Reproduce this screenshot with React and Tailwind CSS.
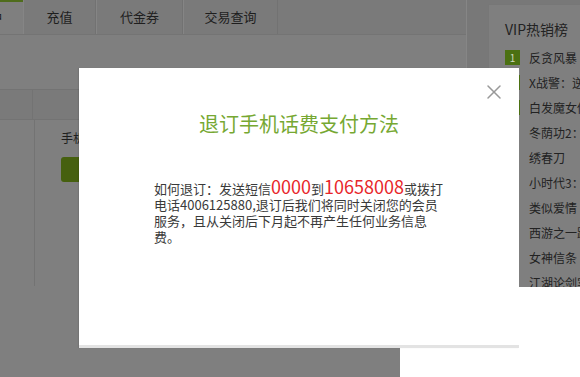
import { X } from 'lucide-react';

const tabs = [
  { label: '充值', width: 'w-[73px]' },
  { label: '代金券', width: 'w-[87px]' },
  { label: '交易查询', width: 'w-[95px]' },
];

const hotList = [
  '反贪风暴',
  'X战警：逆转未来',
  '白发魔女传之明月天国',
  '冬荫功2：拳霸天下',
  '绣春刀',
  '小时代3：刺金时代',
  '类似爱情',
  '西游之一路向西',
  '女神信条',
  '江湖论剑实录',
];

const App = () => {
  return (
    <div
      className="relative w-[580px] h-[377px] overflow-hidden bg-white text-[#1e1e1e]"
      style={{ fontFamily: '"Noto Sans CJK SC", "Noto Sans", sans-serif' }}
    >
      {/* dimmed page behind the dialog */}
      <div className="flex h-[287px] bg-[#787878]">
        <div className="w-[467px] shrink-0 bg-[#7f7f7f] border-r border-[#868686]">
          <div className="flex h-[35px] bg-[#7a7a7a] border-b border-[#747474]">
            <div className="w-[23px] shrink-0 overflow-hidden flex justify-end items-center pr-[20px] bg-[#7f7f7f] border-t-2 border-[#4f6c1c] text-[13px] whitespace-nowrap">
              我的账户
            </div>
            {tabs.map(tab => (
              <div
                key={tab.label}
                className={`${tab.width} shrink-0 flex items-center justify-center border-l border-[#858585] border-r border-r-[#727272] text-[13px]`}
              >
                {tab.label}
              </div>
            ))}
          </div>
          <div className="h-[54px] pt-[16px] text-[13px] leading-[18px]">
            <span className="-ml-[6px]">：</span>
          </div>
          <div className="flex h-[31px] bg-[#7a7a7a] border-y border-[#737373]">
            <div className="w-[33px] border-r border-[#737373]" />
            <div className="flex-1" />
          </div>
          <div className="flex h-[166px]">
            <div className="w-[35px] border-r border-[#737373]" />
            <div className="pl-[26px] pt-[9px]">
              <div className="text-[12px] leading-[18px] whitespace-nowrap">手机话费支付</div>
              <div className="mt-[10px] w-[60px] h-[25px] rounded-[3px] bg-[#46600f]" />
            </div>
          </div>
        </div>
        <div className="ml-[21px] mt-[4px] w-[100px] shrink-0 bg-[#7f7f7f] border-l border-t border-[#777777] overflow-hidden">
          <div className="pl-[16px] pt-[14px] text-[14px] leading-[20px] whitespace-nowrap text-[#222]">VIP热销榜</div>
          <ul className="mt-[6px] pl-[16px]">
            {hotList.map((name, i) => (
              <li key={name} className="flex items-center h-[25px] whitespace-nowrap text-[12px] text-[#222]">
                <span
                  className={`w-[15px] h-[15px] shrink-0 flex items-center justify-center text-[10px] text-[#cfd8c0] ${i < 3 ? 'bg-[#4b7012]' : 'bg-[#7f7f7f]'}`}
                >
                  {i < 3 ? i + 1 : ''}
                </span>
                <span className="ml-[9px]">{name}</span>
              </li>
            ))}
          </ul>
        </div>
      </div>
      <div className="flex h-[90px]">
        <div className="w-[400px] bg-[#7f7f7f]" />
        <div className="flex-1 bg-white" />
      </div>

      {/* dialog */}
      <div className="absolute left-[79px] top-[68px] w-[440px] h-[280px] bg-white border-b-[3px] border-[#e3e3e3] shadow-[-1px_0_1px_rgba(0,0,0,0.08)]">
        <button className="absolute top-[12px] right-[13px] text-[#999999]">
          <X size={24} strokeWidth={1.5} />
        </button>
        <h2 className="pt-[42px] text-center text-[20px] leading-[28px] font-normal text-[#76a832]">
          退订手机话费支付方法
        </h2>
        <p className="mt-[40px] ml-[75px] w-[290px] text-[13px] leading-[16px] text-[#3a3a3a]">
          如何退订：发送短信<span className="text-[18px] leading-[16px] text-[#e8262b]">0000</span>到
          <span className="text-[18px] leading-[16px] text-[#e8262b]">10658008</span>或拨打电话4006125880,退订后我们将同时关闭您的会员服务，且从关闭后下月起不再产生任何业务信息费。
        </p>
      </div>
    </div>
  );
};

export default App;
